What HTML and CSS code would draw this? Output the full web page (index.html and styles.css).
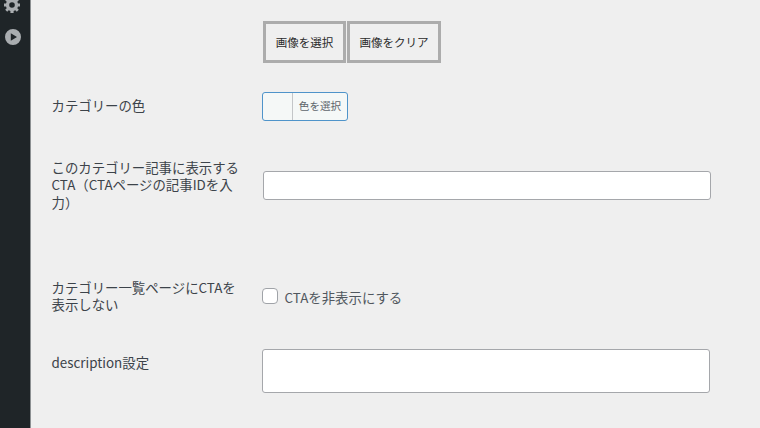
FILE: index.html
```html
<!DOCTYPE html>
<html lang="ja">
<head>
    <meta charset="UTF-8">
    <title>カテゴリーの編集</title>
    <link rel="stylesheet" href="styles.css">
</head>
<body>

    <nav class="admin-menu">
        <svg class="menu-icon" viewBox="0 0 18 18" width="18" height="18">
            <path fill-rule="evenodd" d="M17 10.600h-2l-.7 1.700 1.500 1.500-2 2-1.500-1.500-1.700.7v2H7.400v-2l-1.700-.7-1.500 1.500-2-2 1.500-1.500-.7-1.700H1V7.400h2l.7-1.700-1.500-1.500 2-2 1.500 1.500L7.400 3V1h3.200v2l1.700.7 1.500-1.500 2 2-1.500 1.500.7 1.700h2zM9 11.800a2.800 2.800 0 1 0 0-5.600 2.800 2.800 0 0 0 0 5.600z"/>
        </svg>
        <svg class="menu-icon" viewBox="0 0 16 16" width="16" height="16">
            <path fill-rule="evenodd" d="M8 0a8 8 0 1 0 0 16A8 8 0 0 0 8 0zM5.800 4.200 12 8l-6.200 3.800z"/>
        </svg>
    </nav>

    <form class="form-table">
        <div class="form-row row-image">
            <span class="label"></span>
            <div class="field">
                <button type="button" class="image-button">画像を選択</button>
                <button type="button" class="image-button clear">画像をクリア</button>
            </div>
        </div>
        <div class="form-row row-color">
            <span class="label">カテゴリーの色</span>
            <div class="field">
                <button type="button" class="color-button"><span class="color-text">色を選択</span></button>
            </div>
        </div>
        <div class="form-row row-cta">
            <label class="label" for="cta">このカテゴリー記事に表示するCTA（CTAページの記事IDを入力）</label>
            <div class="field">
                <input type="text" id="cta" class="text-input">
            </div>
        </div>
        <div class="form-row row-hide">
            <span class="label">カテゴリー一覧ページにCTAを表示しない</span>
            <label class="field check-label">
                <input type="checkbox" class="checkbox">
                <span class="check-text">CTAを非表示にする</span>
            </label>
        </div>
        <div class="form-row row-description">
            <label class="label" for="description">description設定</label>
            <div class="field">
                <textarea id="description" class="text-area"></textarea>
            </div>
        </div>
    </form>

</body>
</html>
```

FILE: styles.css
```css
* {
    margin: 0;
    padding: 0;
    box-sizing: border-box;
}

body {
    display: flex;
    height: 428px;
    overflow: hidden;
    background: #efefef;
    color: #3c434a;
    font-family: 'Noto Sans CJK JP', sans-serif;
    font-size: 13.4px;
    line-height: 17.4px;
}

button,
input,
textarea {
    font-family: inherit;
}

/* サイドメニュー */
.admin-menu {
    display: flex;
    flex-direction: column;
    align-items: center;
    gap: 15px;
    width: 30px;
    padding-right: 4px;
    background: #1f2528;
    box-shadow: 1px 0 0 #8c9092;
}

.menu-icon {
    flex: none;
    fill: #a9adb0;
}

.menu-icon:first-child {
    margin: -4px 3px 0 0;
}

/* 設定フォーム */
.form-table {
    flex: 1;
    padding: 21px 0 0 21.5px;
}

.form-row {
    display: grid;
    grid-template-columns: 188px 449px;
    column-gap: 22.5px;
    align-items: start;
}

.row-image { height: 71px; }
.row-color { height: 67px; }
.row-cta { height: 120px; }
.row-hide { height: 70px; }

.row-color .label { padding-top: 5px; }
.row-cta .field { padding: 12px 0 0 1px; }
.row-description .label { padding-top: 5px; }

.field {
    display: flex;
}

.image-button {
    width: 83px;
    height: 42px;
    margin-left: 1px;
    border: 3px solid #acacac;
    background: #efefef;
    color: #2b2b2b;
    font-size: 11.5px;
}

.image-button.clear {
    width: 94px;
}

.color-button {
    width: 86px;
    height: 29px;
    padding-left: 29px;
    border: 1px solid #4f94ca;
    border-radius: 3px;
    background: #f5f8f7;
}

.color-text {
    display: block;
    height: 27px;
    border-left: 1px solid #c3c6c8;
    color: #60666c;
    font-size: 10.6px;
    line-height: 26px;
    text-align: center;
}

.text-input,
.text-area {
    display: block;
    width: 448px;
    border: 1px solid #a5a7ab;
    border-radius: 3px;
    background: #fff;
}

.text-input {
    height: 29px;
}

.text-area {
    height: 44px;
    resize: none;
}

.check-label {
    align-items: flex-start;
    gap: 6.500px;
    padding-top: 9px;
    color: #50575e;
}

.check-text {
    padding-top: 1px;
}

.checkbox {
    width: 16px;
    height: 16px;
    appearance: none;
    border: 1px solid #a0a3a8;
    border-radius: 4px;
    background: #fff;
}
```
